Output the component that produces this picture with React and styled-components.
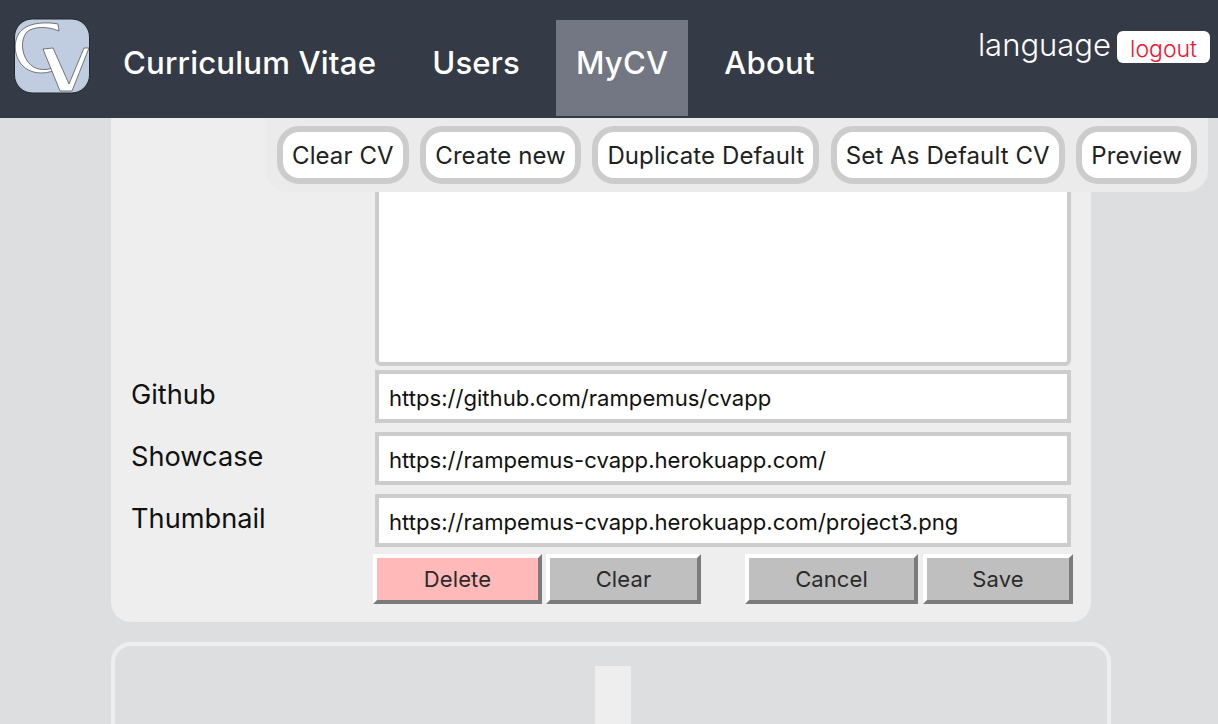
import styled, { createGlobalStyle } from 'styled-components';

const GlobalStyle = createGlobalStyle`
  html, body {
    margin: 0;
    padding: 0;
    background-color: #dddee0;
  }
  body {
    font-family: Inter, "Noto Sans", sans-serif;
    color: #212121;
  }
  * {
    box-sizing: border-box;
  }
`;

const Logo = () => (
  <LogoSvg viewBox="12 17 80 80">
    <rect x="14.5" y="19" width="75" height="74" rx="18" fill="#c0cde0" stroke="#23272f" strokeWidth="1" />
    <path
      d="M58 24 C48 22 30 22 22 30 C13 38 13 55 22 65 C30 74 44 75 55 70 L53 68 C44 71 34 70 28 62 C21 53 21 40 26 33 C32 26 48 26 59 31 Z"
      fill="#fff"
      stroke="#444"
      strokeWidth="0.7"
    />
    <path d="M43 49 L53 48 L69 84 L84 48 L89 48 L72 91 L60 91 Z" fill="#fff" stroke="#444" strokeWidth="0.7" />
  </LogoSvg>
);

const App = () => {
  return (
    <Page>
      <GlobalStyle />
      <Header>
        <Logo />
        <Nav>
          <NavItem>Curriculum Vitae</NavItem>
          <NavItem>Users</NavItem>
          <NavItem $active>MyCV</NavItem>
          <NavItem>About</NavItem>
        </Nav>
        <UserBox>
          <Language>language</Language>
          <Logout>logout</Logout>
        </UserBox>
      </Header>
      <Main>
        <Toolbar>
          <ToolButton>Clear CV</ToolButton>
          <ToolButton>Create new</ToolButton>
          <ToolButton>Duplicate Default</ToolButton>
          <ToolButton>Set As Default CV</ToolButton>
          <ToolButton>Preview</ToolButton>
        </Toolbar>
        <Panel>
          <TextArea readOnly defaultValue="" />
          <Row>
            <Label>Github</Label>
            <Input readOnly defaultValue="https://github.com/rampemus/cvapp" />
          </Row>
          <Row>
            <Label>Showcase</Label>
            <Input readOnly defaultValue="https://rampemus-cvapp.herokuapp.com/" />
          </Row>
          <Row>
            <Label>Thumbnail</Label>
            <Input readOnly defaultValue="https://rampemus-cvapp.herokuapp.com/project3.png" />
          </Row>
          <Actions>
            <ActionButton $width={169} $bg="#ffb9b9">Delete</ActionButton>
            <ActionButton $width={155}>Clear</ActionButton>
            <ActionButton $width={173} $push={40}>Cancel</ActionButton>
            <ActionButton $width={150} $push={1}>Save</ActionButton>
          </Actions>
        </Panel>
        <PreviewCard>
          <PreviewColumn />
        </PreviewCard>
      </Main>
    </Page>
  );
};

export default App;

const Page = styled.div`
  width: 1218px;
  height: 724px;
  overflow: hidden;
`;

const Header = styled.header`
  display: flex;
  align-items: flex-start;
  height: 118px;
  background-color: #343a46;
`;

const LogoSvg = styled.svg`
  flex: none;
  width: 80px;
  height: 80px;
  margin: 17px 0 0 12px;
`;

const Nav = styled.nav`
  display: flex;
  gap: 16px;
  margin: 20px 0 0 11px;
`;

const NavItem = styled.a`
  display: flex;
  align-items: center;
  height: 96px;
  padding: 0 20px 10px;
  font-size: 31.2px;
  font-weight: 500;
  letter-spacing: 0.16px;
  color: #fff;
  background-color: ${props => (props.$active ? '#737683' : 'transparent')};
`;

const UserBox = styled.div`
  display: flex;
  align-items: flex-start;
  gap: 6px;
  margin: 26px 8px 0 auto;
`;

const Language = styled.span`
  font-size: 31px;
  font-weight: 300;
  color: #fff;
`;

const Logout = styled.button`
  width: 93px;
  height: 32px;
  margin-top: 5px;
  padding: 3px 0 0;
  border: none;
  border-radius: 6px;
  background-color: #fff;
  color: #f5102c;
  font-family: inherit;
  font-size: 23px;
  font-weight: 300;
`;

const Main = styled.main`
  position: relative;
  padding-left: 111px;
`;

const Toolbar = styled.div`
  position: absolute;
  top: 0;
  left: 266px;
  display: flex;
  align-items: flex-start;
  justify-content: space-between;
  width: 942px;
  height: 74px;
  padding: 8px 11px 0;
  background-color: #ebebeb;
  border-radius: 0 0 22px 22px;
`;

const ToolButton = styled.button`
  height: 58px;
  padding: 0 9px;
  border: 6px solid #cccccc;
  border-radius: 22px;
  background-color: #fff;
  color: #212121;
  font-family: inherit;
  font-size: 24px;
  letter-spacing: 0.1px;
  white-space: nowrap;
`;

const Panel = styled.section`
  display: flex;
  flex-direction: column;
  width: 980px;
  height: 504px;
  padding: 12px 20px 0 20px;
  background-color: #eeeeee;
  border-radius: 0 0 20px 20px;
`;

const TextArea = styled.textarea`
  display: block;
  width: 696px;
  height: 236px;
  margin: 0 0 4px 244px;
  border: 4px solid #cccccc;
  border-radius: 6px;
  background-color: #fff;
  resize: none;
`;

const Row = styled.div`
  display: flex;
  margin-bottom: 9px;
`;

const Label = styled.label`
  width: 244px;
  padding-top: 8px;
  font-size: 27.2px;
  color: #111;
`;

const Input = styled.input`
  width: 696px;
  height: 53px;
  padding: 2px 10px 0;
  border: 4px solid #cccccc;
  background-color: #fff;
  color: #111;
  font-family: inherit;
  font-size: 22.1px;
  outline: none;
`;

const Actions = styled.div`
  display: flex;
  gap: 4px;
  margin: -2px 0 0 242px;
`;

const ActionButton = styled.button`
  flex: none;
  width: ${props => props.$width}px;
  height: 50px;
  margin-left: ${props => props.$push || 0}px;
  padding: 0;
  border: 4px solid;
  border-color: #fff #7b7b7b #7b7b7b #fff;
  background-color: ${props => props.$bg || '#bfbfbf'};
  color: #2b2b2b;
  font-family: inherit;
  font-size: 22px;
  letter-spacing: 0.1px;
`;

const PreviewCard = styled.section`
  display: flex;
  justify-content: center;
  width: 1000px;
  height: 200px;
  margin-top: 20px;
  padding: 20px 0 0 4px;
  border: 4px solid #eeeeee;
  border-radius: 20px;
`;

const PreviewColumn = styled.div`
  width: 36px;
  height: 100%;
  background-color: #eeeeee;
`;
